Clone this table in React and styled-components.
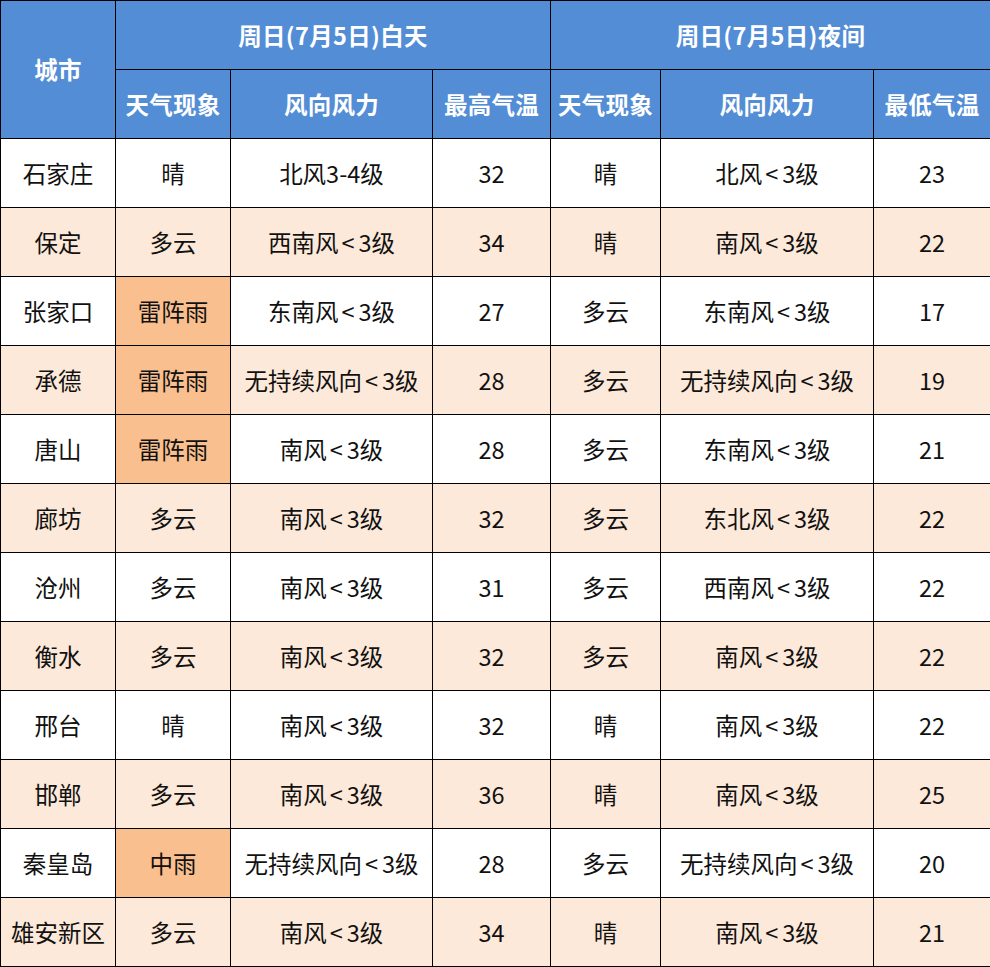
import React from "react";
import styled, { createGlobalStyle } from "styled-components";

const Global = createGlobalStyle`
  html, body { margin: 0; padding: 0; background: #fff; }
  body { font-family: "Noto Sans CJK SC", "Liberation Sans", sans-serif; }
`;

const Table = styled.table`
  width: 990px;
  table-layout: fixed;
  border-collapse: collapse;
  font-family: "Noto Sans CJK SC", "Liberation Sans", sans-serif;
  font-size: 23.5px;
  line-height: 1.2;
  color: #111;
`;

const Th = styled.th`
  background: #538dd5;
  color: #fff;
  font-weight: bold;
  border: 1px solid #000;
  height: 68px;
  padding: 0;
  text-align: center;
  vertical-align: middle;
  white-space: nowrap;
  letter-spacing: 0.3px;
`;

const Tr = styled.tr`
  background: ${(p) => (p.$alt ? "#fde9d9" : "#ffffff")};
`;

const Td = styled.td`
  border: 1px solid #000;
  height: 68px;
  padding: 0;
  text-align: center;
  vertical-align: middle;
  white-space: nowrap;
  background: ${(p) => (p.$hl ? "#fabf8f" : "transparent")};
`;

const Lt = styled.span`
  margin: 0 4px 0 3px;
`;

const widths = [115, 115, 202, 118, 110, 213, 117];

const rows = [
  ["石家庄", "晴", "北风3-4级", "32", "晴", "北风<3级", "23"],
  ["保定", "多云", "西南风<3级", "34", "晴", "南风<3级", "22"],
  ["张家口", "雷阵雨", "东南风<3级", "27", "多云", "东南风<3级", "17"],
  ["承德", "雷阵雨", "无持续风向<3级", "28", "多云", "无持续风向<3级", "19"],
  ["唐山", "雷阵雨", "南风<3级", "28", "多云", "东南风<3级", "21"],
  ["廊坊", "多云", "南风<3级", "32", "多云", "东北风<3级", "22"],
  ["沧州", "多云", "南风<3级", "31", "多云", "西南风<3级", "22"],
  ["衡水", "多云", "南风<3级", "32", "多云", "南风<3级", "22"],
  ["邢台", "晴", "南风<3级", "32", "晴", "南风<3级", "22"],
  ["邯郸", "多云", "南风<3级", "36", "晴", "南风<3级", "25"],
  ["秦皇岛", "中雨", "无持续风向<3级", "28", "多云", "无持续风向<3级", "20"],
  ["雄安新区", "多云", "南风<3级", "34", "晴", "南风<3级", "21"],
];

const isRain = (s) => s.includes("雨");

const renderText = (s) => {
  const idx = s.indexOf("<");
  if (idx < 0) return s;
  return (
    <>
      {s.slice(0, idx)}
      <Lt>&lt;</Lt>
      {s.slice(idx + 1)}
    </>
  );
};

export default function App() {
  return (
    <>
      <Global />
      <Table>
        <colgroup>
          {widths.map((w, i) => (
            <col key={i} style={{ width: w }} />
          ))}
        </colgroup>
        <thead>
          <tr>
            <Th rowSpan={2}>城市</Th>
            <Th colSpan={3}>周日(7月5日)白天</Th>
            <Th colSpan={3}>周日(7月5日)夜间</Th>
          </tr>
          <tr>
            <Th>天气现象</Th>
            <Th>风向风力</Th>
            <Th>最高气温</Th>
            <Th>天气现象</Th>
            <Th>风向风力</Th>
            <Th>最低气温</Th>
          </tr>
        </thead>
        <tbody>
          {rows.map((r, i) => (
            <Tr key={r[0]} $alt={i % 2 === 1}>
              {r.map((c, j) => (
                <Td key={j} $hl={j === 1 && isRain(c)}>
                  {renderText(c)}
                </Td>
              ))}
            </Tr>
          ))}
        </tbody>
      </Table>
    </>
  );
}
